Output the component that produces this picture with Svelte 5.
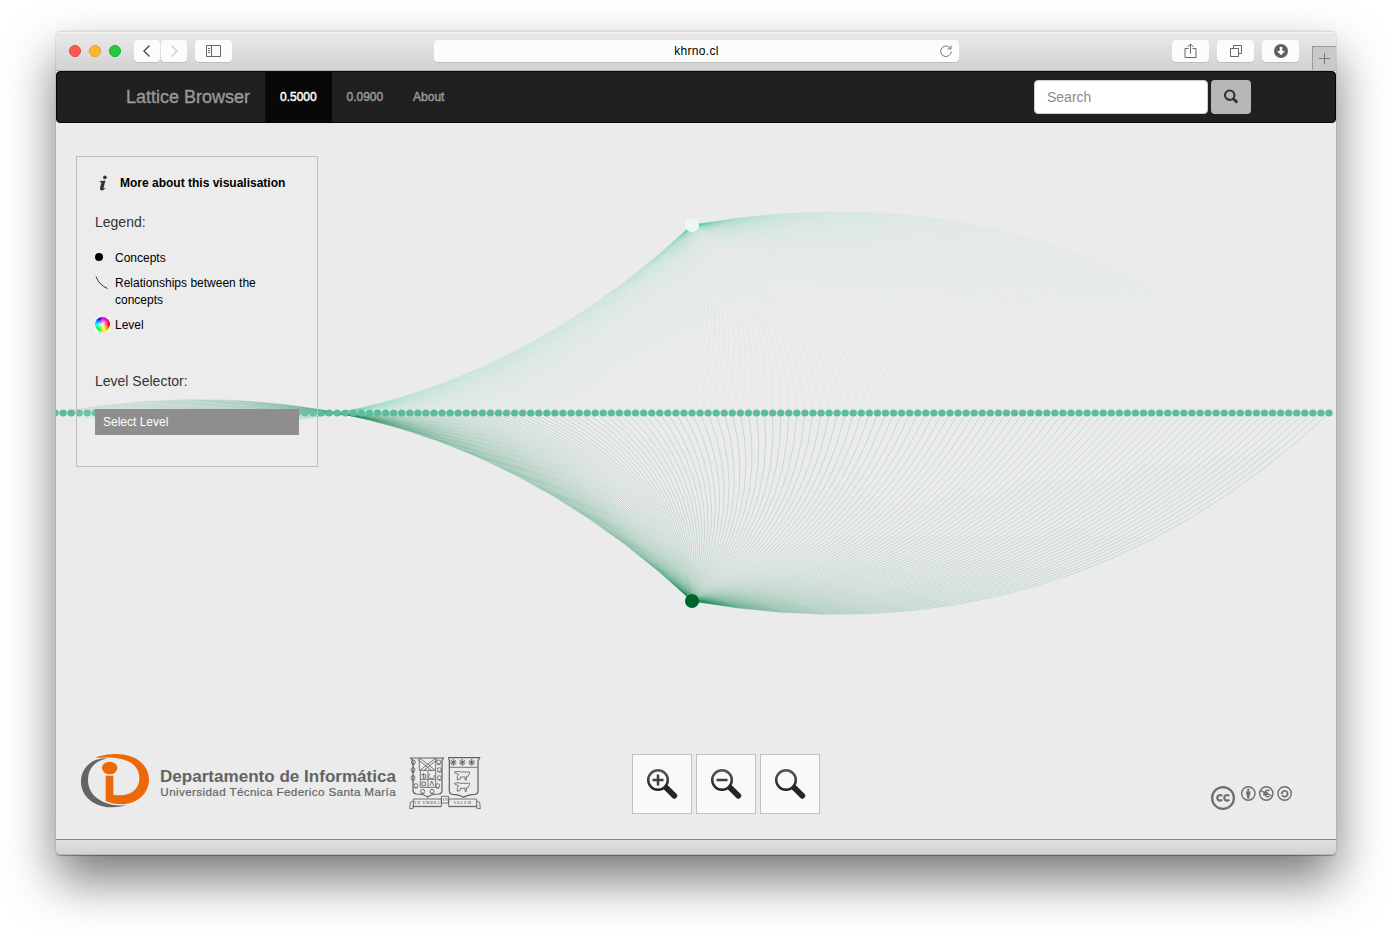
<script>
  // Chart space: origin at the top-left corner of the page below the navbar.
  const rowY = 290;
  const cx = 636;
  const top = { x: cx, y: 102 };
  const bottom = { x: cx, y: 478 };
  const step = 637 / 79;
  const dots = Array.from({ length: 159 }, (_, i) => cx + (i - 79) * step);

  // Quadratic link whose control point sits a quarter chord off the middle.
  function link(from, x, dir) {
    const dx = x - from.x;
    const dy = rowY - from.y;
    const mx = from.x + dx / 2 + (dir * dy) / 4;
    const my = from.y + dy / 2 - (dir * dx) / 4;
    return `M${from.x},${from.y}Q${mx.toFixed(2)},${my.toFixed(2)} ${x.toFixed(2)},${rowY}`;
  }

  const upper = dots.map((x) => link(top, x, 1));
  const lower = dots.map((x) => link(bottom, x, -1));
  const zooms = ['in', 'out', 'reset'];
  const beads = [[40, 53], [39, 76], [39, 100], [48, 124], [68, 141], [96, 141], [113, 124], [118, 100], [118, 76], [116, 53]];
  const stars = [160, 187, 215];
</script>

<div class="window">
  <header class="toolbar">
    <div class="lights"><i class="red"></i><i class="yellow"></i><i class="green"></i></div>
    <div class="history">
      <span class="tb"><svg width="26" height="22"><path d="M15.5 5.5 10 11l5.500 5.500" fill="none" stroke="#555" stroke-width="1.5" /></svg></span>
      <span class="tb"><svg width="26" height="22"><path d="m10.500 5.500 5.500 5.500-5.500 5.500" fill="none" stroke="#d0d0d0" stroke-width="1.500" /></svg></span>
    </div>
    <span class="tb wide side"><svg width="37" height="22"><path d="M11.500 5.500h14v11h-14zM16.500 5.500v11M13 8.500h2M13 10.500h2M13 12.500h2" fill="none" stroke="#666" /></svg></span>
    <div class="address">
      <span>khrno.cl</span>
      <svg width="14" height="14"><path d="M11.600 4.600A5.300 5.300 0 1 0 12.300 7.500M12 1.500v3.500H8.500" fill="none" stroke="#777" /></svg>
    </div>
    <div class="actions">
      <span class="tb wide"><svg width="37" height="22"><path d="M16.500 8.500h-3.500v9h11v-9h-3.500M18.500 13.500V4M15.500 7l3-3 3 3" fill="none" stroke="#666" /></svg></span>
      <span class="tb wide"><svg width="37" height="22"><path d="M13.500 8.500h8v8h-8zM16.500 8V5.500h8v8H22" fill="none" stroke="#666" /></svg></span>
      <span class="tb wide"><svg width="37" height="22"><circle cx="19" cy="11" r="7" fill="#606060" /><path d="M17.700 7h2.600v4h2.700l-4 4.200-4-4.200h2.700z" fill="#fff" /></svg></span>
    </div>
    <span class="newtab"><svg width="23" height="23"><path d="M11.500 6v11M6 11.500h11" stroke="#777" /></svg></span>
  </header>

  <nav>
    <a class="brand">Lattice Browser</a>
    <a class="item active">0.5000</a>
    <a class="item">0.0900</a>
    <a class="item">About</a>
    <div class="search">
      <div class="field">Search</div>
      <div class="go"><svg width="16" height="16"><circle cx="6.700" cy="6.200" r="4.700" fill="none" stroke="#303030" stroke-width="2.100" /><path d="m10 9.500 4.200 4" stroke="#303030" stroke-width="2.800" /></svg></div>
    </div>
  </nav>

  <main>
    <svg class="chart" width="1280" height="716">
      <g class="upper">{#each upper as d}<path {d} />{/each}</g>
      <g class="lower">{#each lower as d}<path {d} />{/each}</g>
      <path d="M0 290H1273" stroke="#7fbfa4" stroke-opacity=".35" stroke-width="3" />
      {#each dots as x}<circle cx={x} cy={rowY} r="3.600" fill="#5bbb9a" />{/each}
      <circle cx={top.x} cy={top.y} r="7" fill="#eaf6fa" />
      <circle cx={bottom.x} cy={bottom.y} r="7" fill="#00642a" />
    </svg>

    <aside>
      <div class="more"><svg width="10" height="16"><circle cx="6.900" cy="2.400" r="1.800" fill="#333" /><path d="M1.600 6.200 7.400 5.400 5.600 12.700q-.2 1 .5.700l1-.8.4.4Q5.600 15.600 3.600 15.500 1.500 15.300 2 13.200L3.300 7.700q.1-.7-1.700-.6z" fill="#333" /></svg><b>More about this visualisation</b></div>
      <h4>Legend:</h4>
      <ul>
        <li><svg width="15" height="15"><circle cx="4" cy="7" r="4" /></svg><span>Concepts</span></li>
        <li><svg width="15" height="15"><path d="M1 1.500Q4 10 12.500 13.500" fill="none" stroke="#333" /></svg><span>Relationships between the concepts</span></li>
        <li><span class="tile"><i class="wheel"></i></span><span>Level</span></li>
      </ul>
      <h4>Level Selector:</h4>
      <div class="select">Select Level</div>
    </aside>

    <footer>
      <div class="logos">
        <svg width="420" height="80" viewBox="0 0 1260 240">
          <path d="M112 40C62 38 33 72 33 110c0 46 42 77 92 77 18 0 32-2 44-6-60 4-115-22-115-77 0-32 20-56 58-64z" fill="#636466" />
          <path d="M76 39C92 30 116 27 139 27c56 0 98 32 98 77 0 43-38 73-83 74-17 0-34-4-47-10V92h23v57c48 9 78-13 78-49 0-42-37-70-132-61z" fill="#eb6909" />
          <ellipse cx="119" cy="69" rx="23" ry="19" fill="#eb6909" />
          <text x="270" y="111" font-size="50" font-weight="700" textLength="708" lengthAdjust="spacingAndGlyphs">Departamento de Informática</text>
          <text x="271" y="154" font-size="35" textLength="706" stroke="#636466" stroke-width=".6">Universidad Técnica Federico Santa María</text>
          <g transform="translate(990 -2)" fill="none" stroke="#606060" stroke-width="2.500">
            <path d="M32 41h98l-4 8v90q0 8-9 10-25 1-34 9-9-8-35-9-9-2-9-11V50zM146 40h93l-5 10v92q-1 7-9 8-22 1-34 9-11-8-34-9-8-1-9-8V50z" stroke-width="3.600" />
            <path d="M58 41v37h49V41M60 42l46 36M106 42 60 78M53 45l42 34M112 45 71 79M61 80v49h46V80M84 80v50M61 105h46M147 69h86" />
            {#each beads as [x, y]}<circle cx={x} cy={y} r="6" /><path d={`M${x - 5} ${y + 7}h10`} />{/each}
            {#each stars as x}<circle cx={x} cy="54" r="3" /><circle cx={x} cy="54" r="8" stroke-dasharray="4 3" /><path d={`M${x - 8} 49l16 10M${x + 8} 49l-16 10M${x} 44v20`} />{/each}
            <path d="M163 83q12-4 20 0h22q7-3 2 7l-4 7-4-1v11h-4V98h-14v6l-9 3v-11l4-6-11-4zM163 117q12-4 20 0h22q7-3 2 7l-4 7-4-1v11h-4v-9h-14v6l-9 3v-11l4-6-11-4z" />
            <path d="M64 91h13v10h-9M66 113h10v11H66zM90 88q-9 9 0 15 15 2 13-11M90 124l5-14 6 14M70 86v16" />
            <path d="M40 164h84v22H40zM146 164h84v22h-84zM124 156h22v20h-22zM40 170l-9 4-2 19 10-1 1-8M230 170l9 4 2 19-10-1-1-8M38 187h86M146 187h84" stroke="#5c5c5c" />
            <text class="motto" x="43" y="180" textLength="76">EX UMBRA</text>
            <text class="motto" x="128" y="171" textLength="15">IN</text>
            <text class="motto" x="161" y="180" textLength="52">SOLEM</text>
          </g>
        </svg>
      </div>
      <div class="zooms">
        {#each zooms as z}
          <button aria-label={z}>
            <svg width="58" height="58">
              <defs><linearGradient id="g-{z}" x1="0" y1="0" x2="0" y2="1"><stop offset="0" stop-color="#555" /><stop offset="1" stop-color="#222" /></linearGradient></defs>
              <path d="m33 32.500 8.300 8.300" stroke="#242424" stroke-width="5.800" stroke-linecap="round" />
              <circle cx="25" cy="25" r="9.800" fill="#f9f9f9" stroke="url(#g-{z})" stroke-width="2.500" />
              {#if z !== 'reset'}<path d="M19.500 25h11" stroke="#3c3c3c" stroke-width="2.500" />{/if}
              {#if z === 'in'}<path d="M25 19.500v11" stroke="#3c3c3c" stroke-width="2.500" />{/if}
            </svg>
          </button>
        {/each}
      </div>
      <svg class="license" width="84" height="26" fill="none" stroke="#6e6e6e">
        <circle cx="13" cy="14" r="10.900" stroke-width="2.300" />
        <path d="M12.200 12a2.800 2.800 0 1 0 0 3.600M19.200 12a2.800 2.800 0 1 0 0 3.600" stroke-width="2.200" />
        <g stroke-width="1.400">
          <circle cx="38.300" cy="9.500" r="6.700" /><circle cx="56.300" cy="9.500" r="6.700" /><circle cx="74.600" cy="9.500" r="6.700" />
        </g>
        <circle cx="38.300" cy="5.700" r="1.200" fill="#6e6e6e" stroke="none" />
        <path d="M36.300 7.300h4v3.700h-.8v3.500h-2.400V11h-.8z" fill="#6e6e6e" stroke="none" />
        <path d="M59.500 6.800a3.200 3.200 0 1 0 0 5.500M53 8.800h5M53 10.600h5" stroke-width="1.300" />
        <path d="m50.500 6.500 11.500 5.500" stroke-width="1.300" />
        <path d="M71.800 8.900a3 3 0 1 1 .2 2.200" stroke-width="1.700" />
        <path d="M70.200 8.700h3.400l-1.700 1.800z" fill="#6e6e6e" stroke="none" />
      </svg>
    </footer>
  </main>
  <div class="status"></div>
</div>

<style>
  :global(body) { background: #fff; overflow: hidden; }
  .window {
    box-sizing: border-box; width: 1280px; height: 824px; margin: 31px 56px 80px;
    display: flex; flex-direction: column; overflow: hidden; border-radius: 5px; background: #ebebeb;
    font: 12px/17px "Liberation Sans", Arial, sans-serif; color: #000;
    box-shadow: 0 1px 1px rgba(0, 0, 0, .3), 0 0 1px rgba(0, 0, 0, .4), 0 25px 50px rgba(0, 0, 0, .53);
  }
  svg { display: block; flex: none; }
  .toolbar {
    position: relative; box-sizing: border-box; height: 40px; flex: none; display: flex; align-items: center;
    background: linear-gradient(#ebebeb, #d2d2d2); border-bottom: 1px solid #b5b5b5; box-shadow: inset 0 1px #dcdcdc, inset 0 2px #f4f4f4;
  }
  .lights { display: flex; gap: 8px; margin-left: 13px; }
  .lights i { box-sizing: border-box; width: 12px; height: 12px; border-radius: 50%; border: 1px solid; }
  .lights .red { background: #ff5950; border-color: #e2463f; }
  .lights .yellow { background: #ffb72b; border-color: #dfa023; }
  .lights .green { background: #27c83a; border-color: #1dac2c; }
  .history { display: flex; gap: 1px; margin-left: 13px; }
  .tb { height: 22px; background: #fcfcfc; border-radius: 4px; box-shadow: 0 1px #bdbdbd; }
  .side { margin-left: 8px; }
  .address {
    width: 525px; height: 22px; margin-left: 202px; display: grid; grid-template-columns: 20px 1fr 20px; align-items: center;
    background: #fcfcfc; border-radius: 4px; box-shadow: 0 1px #bdbdbd; text-align: center;
  }
  .address span { grid-column: 2; padding-top: 2px; letter-spacing: .3px; }
  .actions { display: flex; gap: 8px; margin-left: 213px; }
  .newtab { margin: auto 0 0 13px; width: 23px; height: 23px; border: solid #999; border-width: 1px 0 0 1px; background: #c9c9c9; }
  nav {
    box-sizing: border-box; height: 52px; flex: none; display: flex; align-items: stretch; padding-left: 69px;
    background: #202020; border: 1px solid #060606; border-radius: 4px; line-height: 50px; color: #999;
  }
  .brand { font-size: 18px; width: 124px; padding-right: 15px; white-space: nowrap; -webkit-text-stroke: .35px #999; }
  .item { padding: 0 15px; margin-right: -.2px; -webkit-text-stroke: .45px; }
  .active { background: #080808; color: #fff; }
  .search { display: flex; gap: 3px; margin: 8px 84px 0 auto; }
  .field { box-sizing: border-box; width: 174px; height: 34px; padding: 0 12px; border: 1px solid #ccc; border-radius: 4px; background: #fff; font-size: 14px; line-height: 33px; color: #8a8a8a; }
  .go { width: 40px; height: 34px; border-radius: 4px; background: #b7b7b7; display: flex; align-items: center; justify-content: center; }
  main { position: relative; flex: 1; display: flex; flex-direction: column; justify-content: space-between; }
  .chart { position: absolute; inset: 0; }
  .upper, .lower { fill: none; stroke-width: .6; }
  .upper { stroke: rgba(85, 205, 168, .15); }
  .lower { stroke: rgba(35, 139, 90, .31); }
  aside {
    position: relative; box-sizing: border-box; width: 242px; height: 311px; margin: 33px 0 0 20px; padding: 17px 18px 0;
    border: 1px solid #c0c0c0; background: rgba(250, 250, 250, .12);
  }
  .more { display: flex; align-items: center; gap: 16px; padding-left: 3px; height: 18px; }
  .more b { white-space: nowrap; margin-left: -4px; }
  h4 { margin: 21px 0 19px; font: 14px/18px "Liberation Sans", Arial, sans-serif; color: #333; }
  ul { list-style: none; margin: 0 0 38px; padding: 0; display: grid; gap: 8px; }
  li { display: flex; gap: 5px; }
  .tile { width: 15px; height: 15px; flex: none; background: #f8f8f8; }
  .wheel {
    display: block; width: 15px; height: 15px; border-radius: 50%;
    background: radial-gradient(#fff, rgba(255, 255, 255, 0) 60%), conic-gradient(#d0f, #f06 15%, #f00 25%, #ff0 45%, #0f0 60%, #0ff 75%, #00f 92%, #d0f);
  }
  .select { height: 26px; padding-left: 8px; background: #8e8e8e; color: #fff; line-height: 26px; }
  footer { position: relative; height: 94px; display: grid; grid-template-columns: 576px 1fr 126px; align-items: start; }
  .logos { margin-left: 14px; fill: #636466; }
  .motto { font: 11px "Liberation Serif", serif; fill: #444; stroke: none; }
  .zooms { display: flex; gap: 4px; padding-top: 9px; }
  .zooms button { box-sizing: border-box; width: 60px; height: 60px; padding: 0; border: 1px solid #c0c0c0; background: #f9f9f9; }
  .license { margin-top: 39px; }
  .status { box-sizing: border-box; height: 16px; flex: none; border-top: 1px solid #858585; border-bottom: 1px solid #b8b8b8; background: linear-gradient(#e0e0e0, #d2d2d2); }
</style>
